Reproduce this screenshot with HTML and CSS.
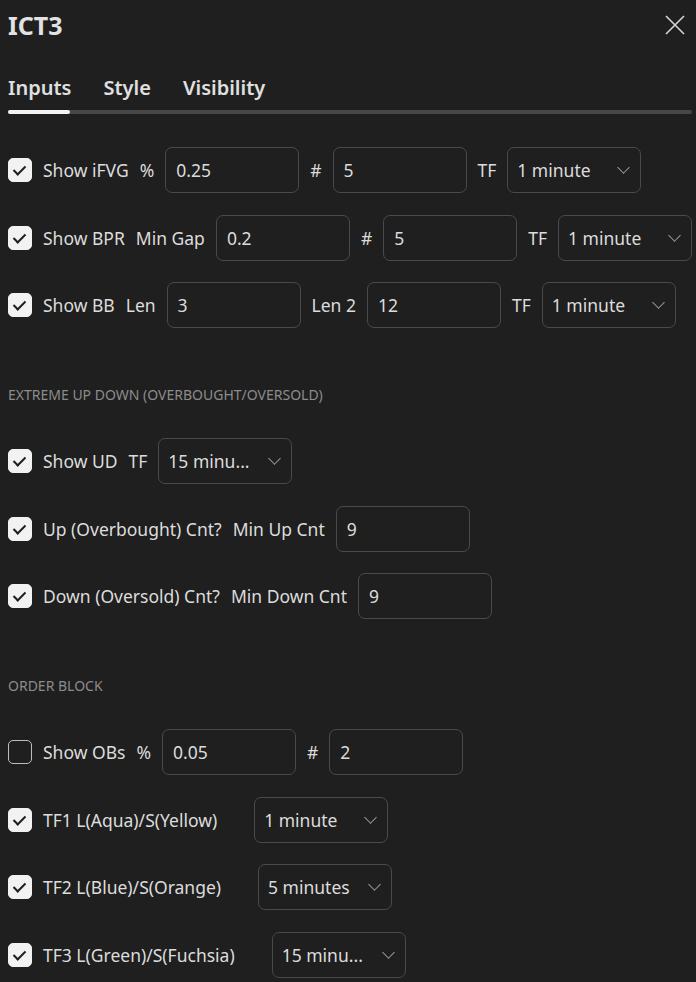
FILE: index.html
```html
<!DOCTYPE html>
<html lang="en">
<head>
    <meta charset="UTF-8">
    <meta name="viewport" content="width=device-width, initial-scale=1.0">
    <title>ICT3 settings</title>
    <link rel="stylesheet" href="styles.css">
</head>
<body>
<div class="dialog">
    <header class="dialog-head">
        <h1>ICT3</h1>
        <button class="close-btn" aria-label="Close">
            <svg width="20" height="20" viewBox="0 0 20 20"><path d="M1 1 L19 19 M19 1 L1 19" stroke="#d6d6d6" stroke-width="1.6" fill="none"/></svg>
        </button>
    </header>

    <nav class="tabs">
        <span class="tab active">Inputs</span>
        <span class="tab">Style</span>
        <span class="tab">Visibility</span>
    </nav>
    <div class="tab-track"><div class="tab-thumb"></div></div>

    <main class="inputs">
        <div class="row">
            <span class="check on"></span>
            <span class="label">Show iFVG</span>
            <span class="label">%</span>
            <input class="field" type="text" value="0.25">
            <span class="label">#</span>
            <input class="field" type="text" value="5">
            <span class="label">TF</span>
            <div class="select"><span class="select-value">1 minute</span><span class="chev"></span></div>
        </div>
        <div class="row">
            <span class="check on"></span>
            <span class="label">Show BPR</span>
            <span class="label">Min Gap</span>
            <input class="field" type="text" value="0.2">
            <span class="label">#</span>
            <input class="field" type="text" value="5">
            <span class="label">TF</span>
            <div class="select"><span class="select-value">1 minute</span><span class="chev"></span></div>
        </div>
        <div class="row">
            <span class="check on"></span>
            <span class="label">Show BB</span>
            <span class="label">Len</span>
            <input class="field" type="text" value="3">
            <span class="label">Len 2</span>
            <input class="field" type="text" value="12">
            <span class="label">TF</span>
            <div class="select"><span class="select-value">1 minute</span><span class="chev"></span></div>
        </div>

        <h2 class="group-title">Extreme Up Down (Overbought/Oversold)</h2>
        <div class="row">
            <span class="check on"></span>
            <span class="label">Show UD</span>
            <span class="label">TF</span>
            <div class="select"><span class="select-value">15 minu...</span><span class="chev"></span></div>
        </div>
        <div class="row">
            <span class="check on"></span>
            <span class="label">Up (Overbought) Cnt?</span>
            <span class="label">Min Up Cnt</span>
            <input class="field" type="text" value="9">
        </div>
        <div class="row">
            <span class="check on"></span>
            <span class="label">Down (Oversold) Cnt?</span>
            <span class="label">Min Down Cnt</span>
            <input class="field" type="text" value="9">
        </div>

        <h2 class="group-title">Order Block</h2>
        <div class="row">
            <span class="check"></span>
            <span class="label">Show OBs</span>
            <span class="label">%</span>
            <input class="field" type="text" value="0.05">
            <span class="label">#</span>
            <input class="field" type="text" value="2">
        </div>
        <div class="row">
            <span class="check on"></span>
            <span class="label wide">TF1 L(Aqua)/S(Yellow)</span>
            <div class="select"><span class="select-value">1 minute</span><span class="chev"></span></div>
        </div>
        <div class="row">
            <span class="check on"></span>
            <span class="label wide">TF2 L(Blue)/S(Orange)</span>
            <div class="select"><span class="select-value">5 minutes</span><span class="chev"></span></div>
        </div>
        <div class="row">
            <span class="check on"></span>
            <span class="label wide">TF3 L(Green)/S(Fuchsia)</span>
            <div class="select"><span class="select-value">15 minu...</span><span class="chev"></span></div>
        </div>
    </main>
</div>
</body>
</html>
```

FILE: styles.css
```css
body {
    margin: 0;
    background-color: #1f1f1f;
    color: #dcdcdc;
    font-family: "Noto Sans", "Open Sans", sans-serif;
}
.dialog {
    padding: 0 4px 0 8px;
}
.dialog-head {
    display: flex;
    justify-content: space-between;
    align-items: center;
    height: 50px;
}
.dialog-head h1 {
    margin: 0;
    font-size: 25px;
    font-weight: 700;
    color: #e2e2e2;
}
.close-btn {
    background: none;
    border: none;
    padding: 0;
    margin-right: 7px;
    width: 20px;
    height: 20px;
    cursor: pointer;
}
.tabs {
    display: flex;
    gap: 32px;
    margin-top: 24px;
}
.tab {
    font-size: 20px;
    font-weight: 600;
    color: #e0e0e0;
    line-height: 28px;
}
.tab-track {
    margin-top: 8px;
    height: 4px;
    border-radius: 2px;
    background-color: #474747;
}
.tab-thumb {
    width: 62px;
    height: 4px;
    border-radius: 2px;
    background-color: #f2f2f2;
}
.inputs {
    padding-top: 33px;
}
.row {
    display: flex;
    align-items: center;
    gap: 11px;
    height: 46px;
    margin-bottom: 21.5px;
}
.label {
    font-size: 17.5px;
    white-space: nowrap;
}
.label.wide {
    margin-right: 26px;
}
.check {
    flex: none;
    width: 24px;
    height: 24px;
    box-sizing: border-box;
    border: 1.5px solid #bdbdbd;
    border-radius: 5px;
    position: relative;
}
.check.on {
    background-color: #f2f2f2;
    border-color: #f2f2f2;
}
/* tick drawn with two borders */
.check.on::after {
    content: "";
    position: absolute;
    left: 7px;
    top: 4px;
    width: 5px;
    height: 10px;
    border: solid #1f1f1f;
    border-width: 0 2px 2px 0;
    transform: rotate(45deg);
}
.field, .select {
    box-sizing: border-box;
    width: 134px;
    height: 46px;
    border: 1px solid #4a4a4a;
    border-radius: 7px;
    background: transparent;
    color: #dcdcdc;
    font-family: inherit;
    font-size: 17.5px;
    padding: 0 10px;
    flex: none;
}
.field {
    outline: none;
}
.select {
    display: flex;
    align-items: center;
    padding: 0 10px 0 9px;
}
.select-value {
    flex: 1;
    min-width: 0;
    white-space: nowrap;
}
.chev {
    flex: none;
    width: 8px;
    height: 8px;
    margin: 0 2px 5px 14px;
    border: solid #9a9a9a;
    border-width: 0 1.3px 1.3px 0;
    transform: rotate(45deg);
}
.group-title {
    margin: 57px 0 33px;
    font-size: 14px;
    font-weight: 400;
    text-transform: uppercase;
    color: #8c8c8c;
    line-height: 20px;
}
```
